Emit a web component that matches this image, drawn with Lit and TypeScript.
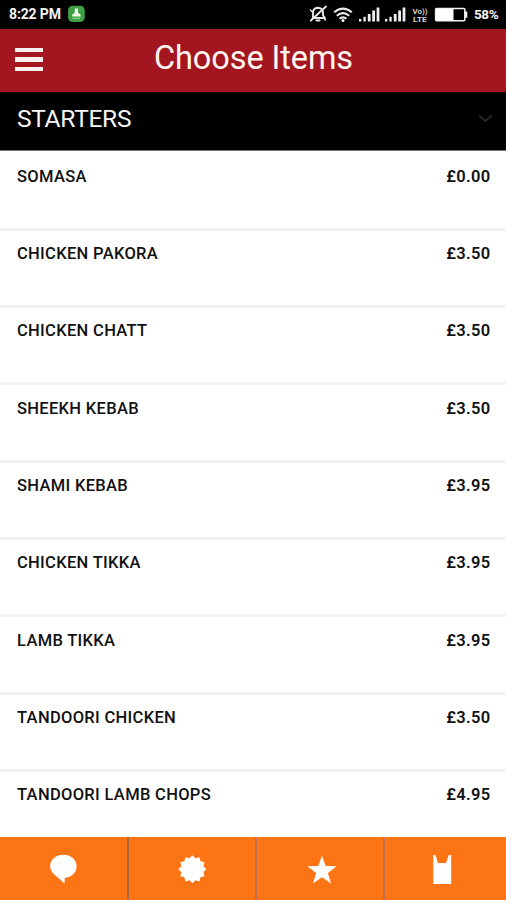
import { LitElement, html, css, svg } from "lit";
import { customElement } from "lit/decorators.js";

interface MenuItem {
  name: string;
  price: string;
}

const ITEMS: MenuItem[] = [
  { name: "SOMASA", price: "£0.00" },
  { name: "CHICKEN PAKORA", price: "£3.50" },
  { name: "CHICKEN CHATT", price: "£3.50" },
  { name: "SHEEKH KEBAB", price: "£3.50" },
  { name: "SHAMI KEBAB", price: "£3.95" },
  { name: "CHICKEN TIKKA", price: "£3.95" },
  { name: "LAMB TIKKA", price: "£3.95" },
  { name: "TANDOORI CHICKEN", price: "£3.50" },
  { name: "TANDOORI LAMB CHOPS", price: "£4.95" },
];

/** Points of a star-like polygon centred on (cx, cy). */
function burst(cx: number, cy: number, outer: number, inner: number, tips: number): string {
  const pts: string[] = [];
  for (let i = 0; i < tips * 2; i++) {
    const r = i % 2 ? inner : outer;
    const a = (Math.PI * i) / tips - Math.PI / 2;
    pts.push(`${(cx + r * Math.cos(a)).toFixed(2)},${(cy + r * Math.sin(a)).toFixed(2)}`);
  }
  return pts.join(" ");
}

@customElement("status-bar")
class StatusBar extends LitElement {
  static styles = css`
    :host {
      display: flex;
      align-items: center;
      height: 28.5px;
      padding: 0 7px 0 9px;
      box-sizing: border-box;
      background: #000;
      color: #f4f4f4;
      font: 700 14px/28px Roboto, "Noto Sans", sans-serif;
    }
    .time { width: 59px; letter-spacing: -0.15px; white-space: nowrap; }
    .spacer { flex: 1; }
    .pct { width: 25px; font-size: 13.5px; letter-spacing: -0.4px; white-space: nowrap; }
    svg { display: block; flex: none; }
    .icons { margin-right: 6px; }
  `;
  render() {
    return html`
      <span class="time">8:22 PM</span>
      <svg width="18" height="18" viewBox="0 0 18 18">
        <rect x="0.1" y="0.8" width="16.6" height="16.2" rx="4.5" fill="#3f9f45" />
        <path d="M6.8 3.5h3.2v4.2l2.6 2.1v1.6H4.2V9.8L6.8 7.7z" fill="#effbe9" />
        <path d="M4.6 13.3h7.8" stroke="#9bd598" stroke-width="1" />
      </svg>
      <span class="spacer"></span>
      <svg class="icons" width="159" height="28" viewBox="309 0 159 28" fill="none">
        <g stroke="#e8e8e8" stroke-width="1.9" stroke-linejoin="round" stroke-linecap="round">
          <path d="M313 18V11.5Q314 8 318 7.8Q322.5 8 323 12V15.5L325 18H313Z" />
          <path d="M316.5 20.5h3" />
          <path d="M310.8 20.5L326 6.5" />
          <path d="M310.5 10l2 2M323.5 18l2 2" stroke-width="1.4" />
        </g>
        <g stroke="#ededed" stroke-width="2.1">
          <path d="M334.2 12.3Q343 4.8 351.8 12.3" />
          <path d="M336.8 15.7Q343 10.5 349.2 15.7" />
          <path d="M339.5 18.7Q343 15.9 346.5 18.7" />
        </g>
        <circle cx="343" cy="20.6" r="1.5" fill="#fff" />
        <g fill="#efefef">
          ${[359, 385].map(
            (x) => svg`
              <rect x=${x} y="19" width="2.3" height="2.5" />
              <rect x=${x + 4.4} y="16.8" width="2.3" height="4.7" />
              <rect x=${x + 8.8} y="14" width="2.8" height="7.5" />
              <rect x=${x + 13.2} y="10.5" width="2.8" height="11" />
              <rect x=${x + 17.6} y="7.5" width="2.8" height="14" />`
          )}
        </g>
        <g fill="#d0d0d0" font-family="Roboto, sans-serif" font-size="7" font-weight="700">
          <text x="412.5" y="13.5" textLength="15" lengthAdjust="spacingAndGlyphs">Vo))</text>
          <text x="413" y="21.8" textLength="14" lengthAdjust="spacingAndGlyphs">LTE</text>
        </g>
        <rect x="435.6" y="8.4" width="29.2" height="12.4" rx="1" stroke="#f4f4f4" stroke-width="1.5" />
        <rect x="436" y="9" width="17.5" height="11.5" fill="#fff" />
        <rect x="465" y="11.5" width="2.3" height="6.2" fill="#f4f4f4" />
      </svg>
      <span class="pct">58%</span>
    `;
  }
}

@customElement("title-bar")
class TitleBar extends LitElement {
  static styles = css`
    :host {
      display: flex;
      align-items: center;
      height: 63.5px;
      box-sizing: border-box;
      background: #a3151f;
      color: #fff5f1;
    }
    .menu {
      display: flex;
      flex-direction: column;
      justify-content: space-between;
      width: 28.5px;
      height: 23px;
      margin: 0 0 1.5px 14.5px;
    }
    .bar { height: 4.4px; background: #fff1ed; }
    h1 {
      flex: 1;
      margin: 0 42px 5px 0;
      text-align: center;
      font: 400 32.5px/40px Roboto, "Noto Sans", sans-serif;
      letter-spacing: -0.1px;
      white-space: nowrap;
    }
  `;
  render() {
    return html`
      <div class="menu"><span class="bar"></span><span class="bar"></span><span class="bar"></span></div>
      <h1>Choose Items</h1>
    `;
  }
}

@customElement("menu-section")
class MenuSection extends LitElement {
  static styles = css`
    :host {
      display: block;
      flex: 1;
      min-height: 0;
      overflow: hidden;
      background: #fff;
      font-family: Roboto, "Noto Sans", sans-serif;
    }
    .head {
      display: flex;
      align-items: center;
      justify-content: space-between;
      height: 59px;
      margin-bottom: 2.3px;
      padding: 0 12px 5px 17px;
      box-sizing: border-box;
      background: #000;
      border-bottom: 1px solid #777;
      color: #f6f6f6;
      font-size: 24.5px;
      letter-spacing: -0.3px;
    }
    .row {
      display: flex;
      justify-content: space-between;
      height: 77.33px;
      padding: 13.5px 15.5px 0 17px;
      box-sizing: border-box;
      border-bottom: 3px solid #f2f2f2;
      color: #111;
      font-size: 16.5px;
      line-height: 20px;
      font-weight: 500;
      white-space: nowrap;
    }
    .name { letter-spacing: 0.32px; }
    .price { letter-spacing: 0.3px; font-weight: 600; }
  `;
  render() {
    return html`
      <div class="head">
        <span>STARTERS</span>
        <svg width="17" height="14" viewBox="0 0 17 14" fill="none">
          <path d="M2 3.5l6.5 5.5L15 3.5" stroke="#292724" stroke-width="2" />
        </svg>
      </div>
      ${ITEMS.map(
        (i) => html`<div class="row"><span class="name">${i.name}</span><span class="price">${i.price}</span></div>`
      )}
    `;
  }
}

@customElement("tab-bar")
class TabBar extends LitElement {
  static styles = css`
    :host {
      display: grid;
      grid-template-columns: 128.5px 128px 128px 1fr;
      height: 63px;
      background: #fd7415;
    }
    .tab {
      display: flex;
      align-items: center;
      justify-content: center;
      box-sizing: border-box;
      border-right: 2px solid #a86a3c;
    }
    .tab:nth-child(n + 2) { border-right-color: #c17056; }
    .tab:last-child { border-right: 0; }
    svg { display: block; fill: #fff; }
    .tab:last-child svg { margin-right: 6px; }
    .tab:nth-child(3) svg { margin-left: 5px; }
  `;
  render() {
    return html`
      <div class="tab">
        <svg width="32" height="32" viewBox="0 0 32 32">
          <path d="M16.5 1.8C9 1.8 3.2 6.6 3.2 13C3.2 17 5.2 20.2 8.400 22.400C11 24.400 14.500 27.500 17.500 30.600L17.800 24.800C24.700 24.200 29.600 19.500 29.600 13.200C29.600 6.700 24 1.800 16.500 1.800z" />
        </svg>
      </div>
      <div class="tab">
        <svg width="32" height="32" viewBox="0 0 32 32">
          <polygon points=${burst(16.4, 16.3, 14, 11.4, 12)} />
        </svg>
      </div>
      <div class="tab">
        <svg width="32" height="32" viewBox="0 0 32 32">
          <polygon points=${burst(16, 18, 15.4, 6.2, 5)} />
        </svg>
      </div>
      <div class="tab">
        <svg width="32" height="32" viewBox="0 0 32 32">
          <path d="M7.300 2H9.500L12 10H20L22.800 2H25.200V31H7.300z" />
        </svg>
      </div>
    `;
  }
}

@customElement("app-root")
class AppRoot extends LitElement {
  static styles = css`
    :host {
      display: flex;
      flex-direction: column;
      width: 506px;
      height: 900px;
      overflow: hidden;
      background: #fff;
    }
  `;
  render() {
    return html`
      <status-bar></status-bar>
      <title-bar></title-bar>
      <menu-section></menu-section>
      <tab-bar></tab-bar>
    `;
  }
}
